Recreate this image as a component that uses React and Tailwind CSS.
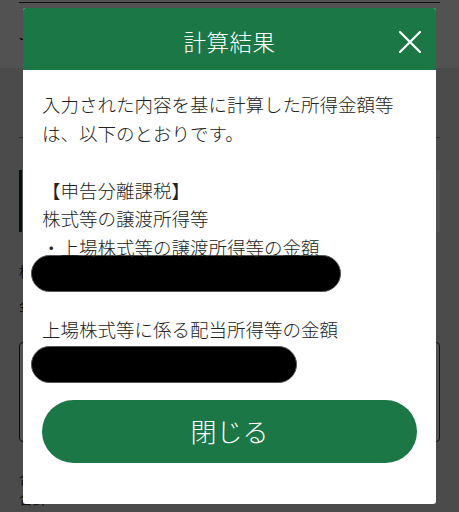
const font = { fontFamily: '"Noto Sans CJK JP", "Noto Sans", sans-serif' }

function Redacted({ width }) {
  return <div className={`h-[37px] rounded-full bg-black border border-[#555] -ml-[11px] ${width}`} />
}

function CloseIcon() {
  return (
    <svg className="absolute right-[15px] top-[23px]" width="22" height="22" viewBox="0 0 22 22" fill="none">
      <path d="M1 1L21 21M21 1L1 21" stroke="white" strokeWidth="2.2" strokeLinecap="round" />
    </svg>
  )
}

export default function App() {
  return (
    <div className="relative w-[459px] h-[512px] overflow-hidden bg-[#e9e9e9]" style={font}>
      {/* page under the dialog */}
      <div className="h-[68px] bg-white px-[19px] pt-[2px]">
        <div className="border-t border-[#333]" />
        <div className="mt-[18px] text-[16px] text-[#111]">Jリスト</div>
      </div>
      <div className="px-[19px]">
        <div className="mt-[69px] border-t border-[#888]" />
        <div className="mt-[32px] h-[62px] border-l-[3px] border-[#0f3d22] bg-white" />
        <div className="mt-[22px] text-[14px] leading-[34px] text-[#333]">
          <div>株式等</div>
          <div>金額</div>
        </div>
        <div className="mt-[20px] h-[100px] rounded border border-[#0f3d22] bg-white" />
        <div className="mt-[26px] text-[14px] leading-[20px] text-[#333]">
          <div>合計</div>
          <div>合計</div>
        </div>
      </div>

      {/* dialog */}
      <div className="absolute inset-0 bg-black/[0.68] pt-[8px] px-[23px]">
        <div className="h-[496px] rounded-[3px] bg-white overflow-hidden">
          <div className="relative h-[62px] bg-[#1b7846] flex items-center justify-center pt-[5px]">
            <span className="text-[22.5px] font-light text-white tracking-[0.5px]">計算結果</span>
            <CloseIcon />
          </div>
          <div className="px-[19px] pt-[20px] text-[18.5px] font-light leading-[28.5px] text-[#222]">
            <p>
              入力された内容を基に計算した所得金額等
              <br />
              は、以下のとおりです。
              <br />
              <br />
              【申告分離課税】
              <br />
              株式等の譲渡所得等
              <br />
              ・上場株式等の譲渡所得等の金額
            </p>
            <div className="-mt-[6px]">
              <Redacted width="w-[310px]" />
            </div>
            <p className="mt-[23px]">上場株式等に係る配当所得等の金額</p>
            <div className="mt-[2px]">
              <Redacted width="w-[266px]" />
            </div>
            <button className="mt-[17px] w-full h-[63px] rounded-full bg-[#1b7846] text-white text-[26px] font-light flex items-center justify-center">
              閉じる
            </button>
          </div>
        </div>
      </div>
    </div>
  )
}
